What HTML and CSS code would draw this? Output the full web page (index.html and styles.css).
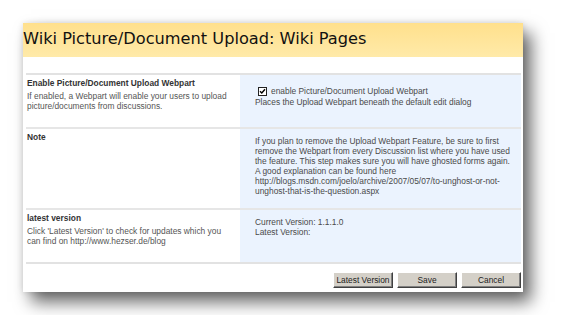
FILE: index.html
```html
<!DOCTYPE html>
<html>
  <head>
    <title>Wiki Picture/Document Upload</title>
    <link rel="stylesheet" href="styles.css">
  </head>
  <body>
    <div class="panel">
      <div class="panel-title">Wiki Picture/Document Upload: Wiki Pages</div>
      <div class="settings">
        <div class="row row-enable">
          <div class="label-col">
            <div class="label-head">Enable Picture/Document Upload Webpart</div>
            <div class="label-desc">If enabled, a Webpart will enable your users to upload picture/documents from discussions.</div>
          </div>
          <div class="value-col">
            <div class="check-line">
              <span class="checkbox">
                <svg width="7" height="7" viewBox="0 0 7 7"><path d="M1 3.2 L2.8 5 L6 1.2" fill="none" stroke="#000" stroke-width="1.4"/></svg>
              </span>
              enable Picture/Document Upload Webpart
            </div>
            <div>Places the Upload Webpart beneath the default edit dialog</div>
          </div>
        </div>
        <div class="row row-note">
          <div class="label-col">
            <div class="label-head">Note</div>
          </div>
          <div class="value-col">
            If you plan to remove the Upload Webpart Feature, be sure to first<br>
            remove the Webpart from every Discussion list where you have used<br>
            the feature. This step makes sure you will have ghosted forms again.<br>
            A good explanation can be found here<br>
            http://blogs.msdn.com/joelo/archive/2007/05/07/to-unghost-or-not-<br>
            unghost-that-is-the-question.aspx
          </div>
        </div>
        <div class="row row-version">
          <div class="label-col">
            <div class="label-head">latest version</div>
            <div class="label-desc">Click 'Latest Version' to check for updates which you can find on http://www.hezser.de/blog</div>
          </div>
          <div class="value-col">
            Current Version: 1.1.1.0<br>
            Latest Version:
          </div>
        </div>
      </div>
      <div class="buttons">
        <button class="btn">Latest Version</button>
        <button class="btn">Save</button>
        <button class="btn">Cancel</button>
      </div>
    </div>
  </body>
</html>
```

FILE: styles.css
```css
body {
  margin: 0;
  padding: 23px;
  background: white;
  font-family: "Liberation Sans", Arial, sans-serif;
}

.panel {
  width: 500px;
  height: 269px;
  background: white;
  box-shadow: 0 0 6px rgba(0,0,0,0.12), 8px 10px 16px rgba(0,0,0,0.6);
  font-size: 8.4px;
  line-height: 10px;
  color: #4a4a4a;
}

.panel-title {
  height: 34px;
  box-sizing: border-box;
  padding: 6px 0 0 0;
  font-family: "DejaVu Sans", Verdana, sans-serif;
  font-size: 16.2px;
  line-height: 20px;
  color: #111;
  background: linear-gradient(to bottom, #ffe08c, #ffeaa9);
}

.settings {
  margin: 16px 2px 0 3px;
  border-top: 2px solid #e2e2e2;
  border-bottom: 2px solid #e2e2e2;
}

.row {
  display: grid;
  grid-template-columns: 214px 1fr;
}

.row + .row {
  border-top: 2px solid #e6e6e6;
}

.row-enable { min-height: 52px; }
.row-note { min-height: 79px; }
.row-version { min-height: 52px; }

.label-col {
  padding: 3px 8px 0 1px;
}

.label-head {
  font-weight: bold;
  color: #333;
  margin-bottom: 3px;
}

.label-desc {
  color: #555;
}

.value-col {
  background: #ebf3fe;
  padding: 7px 4px 0 15px;
}

.row-enable .value-col {
  padding-top: 10px;
}

.check-line {
  display: flex;
  align-items: center;
  gap: 4px;
  height: 12px;
  padding-left: 3px;
}

.checkbox {
  display: inline-flex;
  width: 7px;
  height: 7px;
  border: 1px solid #222;
  background: white;
}

.checkbox svg {
  display: block;
}

.buttons {
  display: flex;
  justify-content: flex-end;
  gap: 4px;
  margin: 8px 2px 0 0;
}

.btn {
  width: 60px;
  height: 16px;
  padding: 0;
  font-family: "Liberation Sans", Arial, sans-serif;
  font-size: 8.4px;
  color: #222;
  background: #d4d0c8;
  border: 1px solid;
  border-color: #ffffff #404040 #404040 #ffffff;
  box-shadow: inset -1px -1px #808080;
}
```
